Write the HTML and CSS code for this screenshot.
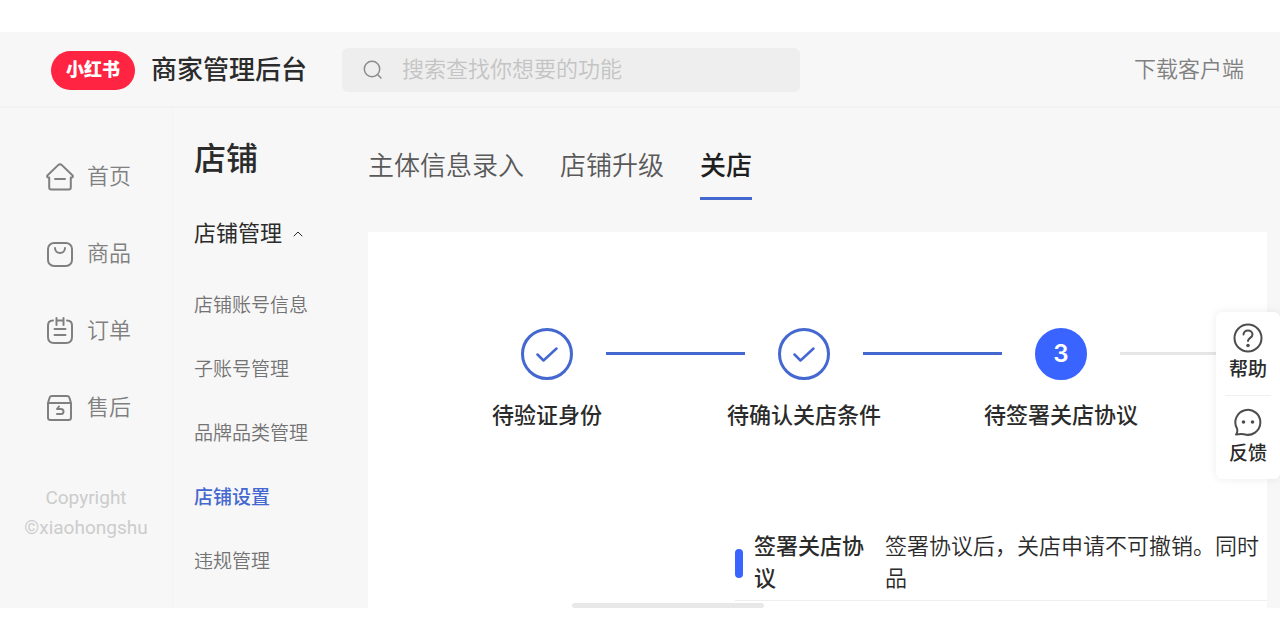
FILE: index.html
```
<!DOCTYPE html>
<html lang="zh-CN">
<head>
    <meta charset="UTF-8">
    <meta name="viewport" content="width=device-width, initial-scale=1.0">
    <title>商家管理后台</title>
    <link rel="stylesheet" href="styles.css">
</head>
<body>
    <header class="header">
        <span class="logo">小红书</span>
        <h1 class="header-title">商家管理后台</h1>
        <label class="search">
            <svg class="search-icon" viewBox="0 0 20 20" aria-hidden="true">
                <circle cx="9" cy="9" r="7.7"/>
                <path d="M14.5 14.5l3.5 3.5"/>
            </svg>
            <input type="text" placeholder="搜索查找你想要的功能" aria-label="搜索">
        </label>
        <a class="download" href="#">下载客户端</a>
    </header>

    <div class="layout">
        <nav class="nav">
            <a class="nav-item" href="#">
                <svg viewBox="0 0 28 28" aria-hidden="true">
                    <path d="M3.2 14.5v10q0 2 2 2h17.6q2 0 2-2v-10h1q1.9-.8.6-2.3L15.6 1.9q-1.6-1.2-3.2 0L1.6 12.2q-1.3 1.5.6 2.3z"/>
                    <path d="M9 16h10"/>
                </svg>
                首页
            </a>
            <a class="nav-item" href="#">
                <svg viewBox="0 0 28 28" aria-hidden="true">
                    <rect x="2" y="3" width="24" height="23" rx="6"/>
                    <path d="M9 8c0 6.500 10 6.500 10 0"/>
                </svg>
                商品
            </a>
            <a class="nav-item" href="#">
                <svg viewBox="0 0 28 28" aria-hidden="true">
                    <path d="M7 3.500q-5 0-5 5V20q0 6 6 6h12q6 0 6-6V8.500q0-5-5-5"/>
                    <path d="M10.500 1v7M17.500 1v7M10.500 3.500h7M8.500 12h11M8.500 18h11"/>
                </svg>
                订单
            </a>
            <a class="nav-item" href="#">
                <svg viewBox="0 0 28 28" aria-hidden="true">
                    <path d="M2 9v14.500q0 2.500 2.500 2.500h18q2.500 0 2.500-2.500V9l-1.500-5Q23 2 21 2H6Q4 2 3.500 4zM2 9h23"/>
                    <path d="M13 12.500l-2 2.500h4q2.500 0 2.500 2.500T15 20h-4"/>
                </svg>
                售后
            </a>
            <p class="copyright">Copyright ©xiaohongshu</p>
        </nav>

        <nav class="submenu">
            <h2 class="submenu-title">店铺</h2>
            <button class="submenu-toggle" type="button" aria-expanded="true">
                店铺管理
                <svg viewBox="0 0 10 6" aria-hidden="true"><path d="M1 5l4-4 4 4"/></svg>
            </button>
            <a href="#">店铺账号信息</a>
            <a href="#">子账号管理</a>
            <a href="#">品牌品类管理</a>
            <a class="active" href="#">店铺设置</a>
            <a href="#">违规管理</a>
        </nav>

        <main class="content">
            <div class="tabs">
                <a href="#">主体信息录入</a>
                <a href="#">店铺升级</a>
                <a class="active" href="#">关店</a>
            </div>
            <section class="panel">
                <ol class="steps">
                    <li class="step">
                        <div class="step-item">
                            <span class="step-circle">
                                <svg viewBox="0 0 22 16" aria-hidden="true"><path d="M1.500 8.500l6 6L20.500 2.500"/></svg>
                            </span>
                            <span class="step-label">待验证身份</span>
                        </div>
                        <span class="step-line"></span>
                    </li>
                    <li class="step">
                        <div class="step-item">
                            <span class="step-circle">
                                <svg viewBox="0 0 22 16" aria-hidden="true"><path d="M1.500 8.500l6 6L20.500 2.500"/></svg>
                            </span>
                            <span class="step-label">待确认关店条件</span>
                        </div>
                        <span class="step-line"></span>
                    </li>
                    <li class="step">
                        <div class="step-item">
                            <span class="step-circle current">3</span>
                            <span class="step-label">待签署关店协议</span>
                        </div>
                        <span class="step-line pending"></span>
                    </li>
                </ol>
                <div class="agreement">
                    <h3>签署关店协议</h3>
                    <p>签署协议后，关店申请不可撤销。同时<br>品</p>
                </div>
                <div class="scrollbar"></div>
            </section>
        </main>
    </div>

    <aside class="float-bar">
        <button type="button">
            <svg viewBox="0 0 30 30" aria-hidden="true">
                <circle cx="15" cy="15" r="13.5"/>
                <path d="M10.500 11.500c0-5.500 9-5.300 9 0 0 3.200-4.500 3.500-4.500 6.500"/>
                <circle class="dot" cx="15" cy="22.500" r="1.800"/>
            </svg>
            帮助
        </button>
        <button type="button">
            <svg viewBox="0 0 30 30" aria-hidden="true">
                <path d="M3 27.500q2-2.500 1-6A12.500 12.500 0 1 1 11 27.200Q7.500 26.500 3 27.500z"/>
                <circle class="dot" cx="10.500" cy="15" r="1.800"/>
                <circle class="dot" cx="19.500" cy="15" r="1.800"/>
            </svg>
            反馈
        </button>
    </aside>
</body>
</html>
```
FILE: styles.css
```
* {
    box-sizing: border-box;
}
body {
    display: flex;
    flex-direction: column;
    height: 100vh;
    margin: 0;
    padding: 32px 0;
    background: #ffffff;
    color: #2b2b2b;
    font-family: Roboto, "Noto Sans CJK SC", sans-serif;
    font-size: 22px;
    line-height: 32px;
}
h1, h2, h3, p, ol {
    margin: 0;
    padding: 0;
}
a {
    color: inherit;
    text-decoration: none;
}
button, input {
    border: none;
    background: none;
    padding: 0;
    color: inherit;
    font: inherit;
}
button {
    cursor: pointer;
}
svg {
    flex: none;
    fill: none;
    stroke: currentColor;
    stroke-width: 2;
    stroke-linecap: round;
    stroke-linejoin: round;
}

/* header */
.header {
    display: flex;
    align-items: center;
    flex: none;
    padding: 16px 36px 14px 51px;
    background: #f7f7f7;
    border-bottom: 2px solid #f2f2f2;
}
.logo {
    padding: 3px 15px 4px;
    border-radius: 20px;
    background: #ff2442;
    color: #ffffff;
    font-size: 18px;
    font-weight: 900;
}
.header-title {
    margin: 0 35px 0 16px;
    font-size: 26px;
    font-weight: 500;
}
.search {
    display: flex;
    align-items: center;
    gap: 19px;
    width: 458px;
    height: 44px;
    padding: 0 21px;
    border-radius: 6px;
    background: #eeeeee;
}
.search-icon {
    width: 20px;
    height: 20px;
    color: #8c8c8c;
    stroke-width: 1.5;
}
.search input {
    flex: 1;
    min-width: 0;
    outline: none;
    font-weight: 350;
}
.search input::placeholder {
    color: #c4c4c4;
}
.download {
    margin-left: auto;
    color: #808080;
    font-weight: 350;
}

/* side menus */
.layout {
    display: flex;
    flex: 1;
    min-height: 0;
    background: #f7f7f7;
}
.nav {
    flex: none;
    width: 173px;
    padding-top: 30px;
    border-right: 1px solid #f3f3f3;
    color: #808080;
    font-weight: 350;
}
.nav-item {
    display: flex;
    align-items: center;
    gap: 13px;
    height: 77px;
    padding-left: 46px;
}
.nav-item svg {
    width: 28px;
    height: 28px;
}
.copyright {
    padding: 37px 20px 0;
    color: #cccccc;
    font-size: 19px;
    font-weight: 400;
    line-height: 30px;
    text-align: center;
}
.submenu {
    display: flex;
    flex-direction: column;
    flex: none;
    width: 195px;
    padding: 31px 0 0 21px;
}
.submenu-title {
    margin-bottom: 39px;
    font-size: 32px;
    font-weight: 500;
    line-height: 40px;
}
.submenu-toggle {
    display: flex;
    align-items: center;
    gap: 11px;
    margin-bottom: 24px;
    font-weight: 400;
}
.submenu-toggle svg {
    width: 10px;
    height: 6px;
    stroke-width: 1;
}
.submenu a {
    color: #737373;
    font-size: 19px;
    font-weight: 350;
    line-height: 64px;
}
.submenu .active {
    color: #4468d0;
    font-weight: 500;
}

/* content */
.content {
    display: flex;
    flex-direction: column;
    flex: 1;
    min-width: 0;
    padding-right: 13px;
}
.tabs {
    display: flex;
    gap: 36px;
    padding: 42px 0 32px;
    font-size: 26px;
}
.tabs a {
    padding-bottom: 15px;
    border-bottom: 3px solid transparent;
    color: #595959;
    font-weight: 350;
}
.tabs .active {
    border-color: #4468d0;
    color: #1f1f1f;
    font-weight: 500;
}
.panel {
    display: flex;
    flex-direction: column;
    flex: 1;
    padding-top: 96px;
    background: #ffffff;
    overflow: hidden;
}
.steps {
    display: flex;
    padding-left: 153px;
    list-style: none;
}
.step {
    display: flex;
    flex: none;
    gap: 33px;
    width: 257px;
    padding-right: 33px;
}
.step-item {
    display: flex;
    flex-direction: column;
    align-items: center;
    gap: 20px;
    flex: none;
    width: 52px;
}
.step-circle {
    display: flex;
    align-items: center;
    justify-content: center;
    width: 52px;
    height: 52px;
    border: 3px solid #4468d0;
    border-radius: 50%;
    color: #4468d0;
}
.step-circle svg {
    width: 22px;
    height: 16px;
    stroke-width: 2.5;
}
.step-circle.current {
    border-color: #3a64ff;
    background: #3a64ff;
    color: #ffffff;
    font-family: Inter, sans-serif;
    font-size: 24px;
    font-weight: 600;
}
.step-label {
    font-weight: 500;
    white-space: nowrap;
}
.step-line {
    flex: 1;
    height: 3px;
    margin-top: 24px;
    background: #4468d0;
}
.step-line.pending {
    background: #e6e6e6;
}
.agreement {
    display: flex;
    align-items: center;
    gap: 19px;
    margin: 99px 0 2px 367px;
    padding-bottom: 5px;
    border-bottom: 1px solid #eeeeee;
}
.agreement::before {
    content: "";
    width: 8px;
    height: 29px;
    margin-right: -8px;
    border-radius: 4px;
    background: #3a64ff;
}
.agreement h3 {
    flex: none;
    width: 112px;
    font-size: 22px;
    font-weight: 500;
}
.agreement p {
    font-weight: 350;
    white-space: nowrap;
}
.scrollbar {
    flex: none;
    width: 192px;
    height: 5px;
    margin-left: 204px;
    border-radius: 3px;
    background: #e8e8e8;
}

/* floating help bar */
.float-bar {
    position: absolute;
    top: 312px;
    right: 0;
    width: 64px;
    padding: 0 9px;
    border-radius: 6px;
    background: #ffffff;
    box-shadow: 0 0 10px rgba(0, 0, 0, 0.08);
}
.float-bar button {
    display: flex;
    flex-direction: column;
    align-items: center;
    gap: 1px;
    width: 100%;
    padding: 11px 0 9px;
    font-size: 19px;
    font-weight: 500;
    white-space: nowrap;
}
.float-bar button + button {
    border-top: 1px solid #f0f0f0;
}
.float-bar svg {
    width: 30px;
    height: 30px;
    color: #4d4d4d;
}
.float-bar .dot {
    fill: currentColor;
    stroke: none;
}
```
